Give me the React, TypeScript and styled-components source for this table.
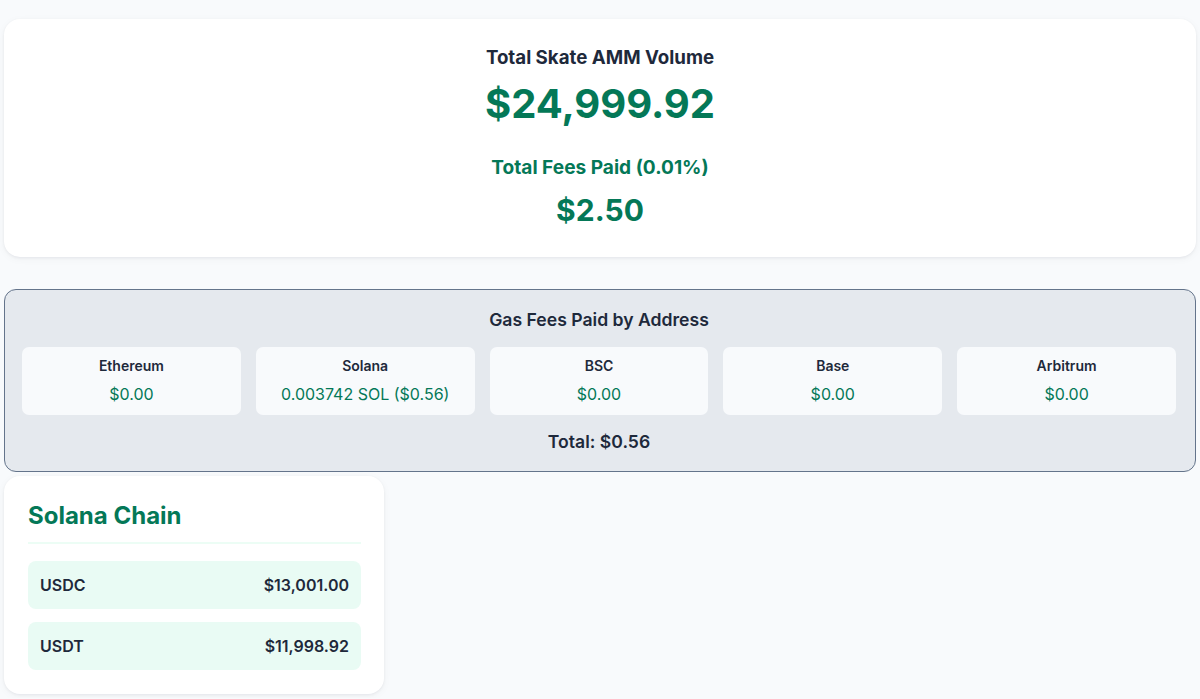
import React from "react";
import styled, { createGlobalStyle } from "styled-components";

const GlobalStyle = createGlobalStyle`
  html, body { margin: 0; padding: 0; background: #f8fafc; }
  body { font-family: Inter, "Noto Sans", sans-serif; color: #1e293b; }
  * { box-sizing: border-box; }
`;

const Page = styled.div`
  padding: 19px 4px 4px;
  display: flex;
  flex-direction: column;
  align-items: flex-start;
`;

const SummaryCard = styled.section`
  width: 100%;
  background: #ffffff;
  border-radius: 16px;
  box-shadow: 0 1px 3px rgba(15, 23, 42, 0.06), 0 2px 8px rgba(15, 23, 42, 0.04);
  padding: 25px 24px 29px;
  display: flex;
  flex-direction: column;
  align-items: center;
  text-align: center;
`;

const Label = styled.h2<{ $green?: boolean; $mt?: number; $size?: number }>`
  margin: ${(p) => p.$mt ?? 0}px 0 0;
  font-size: ${(p) => p.$size ?? 18}px;
  line-height: 28px;
  font-weight: 700;
  color: ${(p) => (p.$green ? "#047857" : "#1e293b")};
`;

const BigValue = styled.div<{ $size: number; $lh: number; $mt: number }>`
  margin-top: ${(p) => p.$mt}px;
  font-size: ${(p) => p.$size}px;
  line-height: ${(p) => p.$lh}px;
  font-weight: 700;
  color: #047857;
`;

const GasCard = styled.section`
  width: 100%;
  margin-top: 32px;
  background: #e5e9ee;
  border: 1px solid #64748b;
  border-radius: 12px;
  padding: 16px 19px 15px 17px;
  display: flex;
  flex-direction: column;
  align-items: center;
`;

const GasTitle = styled.h2`
  margin: 0;
  font-size: 17.6px;
  line-height: 28px;
  font-weight: 600;
  color: #1e293b;
`;

const ChainGrid = styled.div`
  width: 100%;
  margin-top: 13px;
  display: grid;
  grid-template-columns: repeat(5, 1fr);
  gap: 15px;
`;

const ChainBox = styled.div`
  background: #f8fafc;
  border-radius: 7px;
  padding: 9px 12px;
  display: flex;
  flex-direction: column;
  align-items: center;
  gap: 6px;
`;

const ChainName = styled.div`
  font-size: 14px;
  line-height: 20px;
  font-weight: 600;
  color: #1e293b;
`;

const ChainValue = styled.div`
  font-size: 16px;
  line-height: 24px;
  font-weight: 400;
  color: #047857;
`;

const GasTotal = styled.div`
  margin-top: 13px;
  font-size: 17.6px;
  line-height: 28px;
  font-weight: 600;
  color: #1e293b;
`;

const ChainCard = styled.section`
  width: 380px;
  margin-top: 4px;
  background: #ffffff;
  border-radius: 16px;
  box-shadow: 0 1px 3px rgba(15, 23, 42, 0.06), 0 2px 8px rgba(15, 23, 42, 0.04);
  padding: 24px 23px 24px 24px;
`;

const ChainTitle = styled.h3`
  margin: 0;
  padding-bottom: 10px;
  border-bottom: 2px solid #ecfdf5;
  font-size: 24px;
  line-height: 32px;
  font-weight: 700;
  color: #047857;
`;

const TokenList = styled.div`
  margin-top: 17px;
  display: flex;
  flex-direction: column;
  gap: 13px;
`;

const TokenRow = styled.div`
  height: 48px;
  background: #e9fbf4;
  border-radius: 8px;
  padding: 0 12px;
  display: flex;
  align-items: center;
  justify-content: space-between;
  font-size: 16px;
  font-weight: 600;
  color: #1e293b;
`;

const TokenValue = styled.span`
  font-size: 16px;
  font-weight: 600;
`;

const chains = [
  { name: "Ethereum", value: "$0.00" },
  { name: "Solana", value: "0.003742 SOL ($0.56)" },
  { name: "BSC", value: "$0.00" },
  { name: "Base", value: "$0.00" },
  { name: "Arbitrum", value: "$0.00" },
];

const tokens = [
  { symbol: "USDC", value: "$13,001.00" },
  { symbol: "USDT", value: "$11,998.92" },
];

export default function App() {
  return (
    <>
      <GlobalStyle />
      <Page>
        <SummaryCard>
          <Label $size={18.7}>Total Skate AMM Volume</Label>
          <BigValue $size={40} $lh={48} $mt={8}>$24,999.92</BigValue>
          <Label $green $size={19.1} $mt={25}>Total Fees Paid (0.01%)</Label>
          <BigValue $size={30} $lh={36} $mt={11}>$2.50</BigValue>
        </SummaryCard>

        <GasCard>
          <GasTitle>Gas Fees Paid by Address</GasTitle>
          <ChainGrid>
            {chains.map((c) => (
              <ChainBox key={c.name}>
                <ChainName>{c.name}</ChainName>
                <ChainValue>{c.value}</ChainValue>
              </ChainBox>
            ))}
          </ChainGrid>
          <GasTotal>Total: $0.56</GasTotal>
        </GasCard>

        <ChainCard>
          <ChainTitle>Solana Chain</ChainTitle>
          <TokenList>
            {tokens.map((t) => (
              <TokenRow key={t.symbol}>
                <span>{t.symbol}</span>
                <TokenValue>{t.value}</TokenValue>
              </TokenRow>
            ))}
          </TokenList>
        </ChainCard>
      </Page>
    </>
  );
}
